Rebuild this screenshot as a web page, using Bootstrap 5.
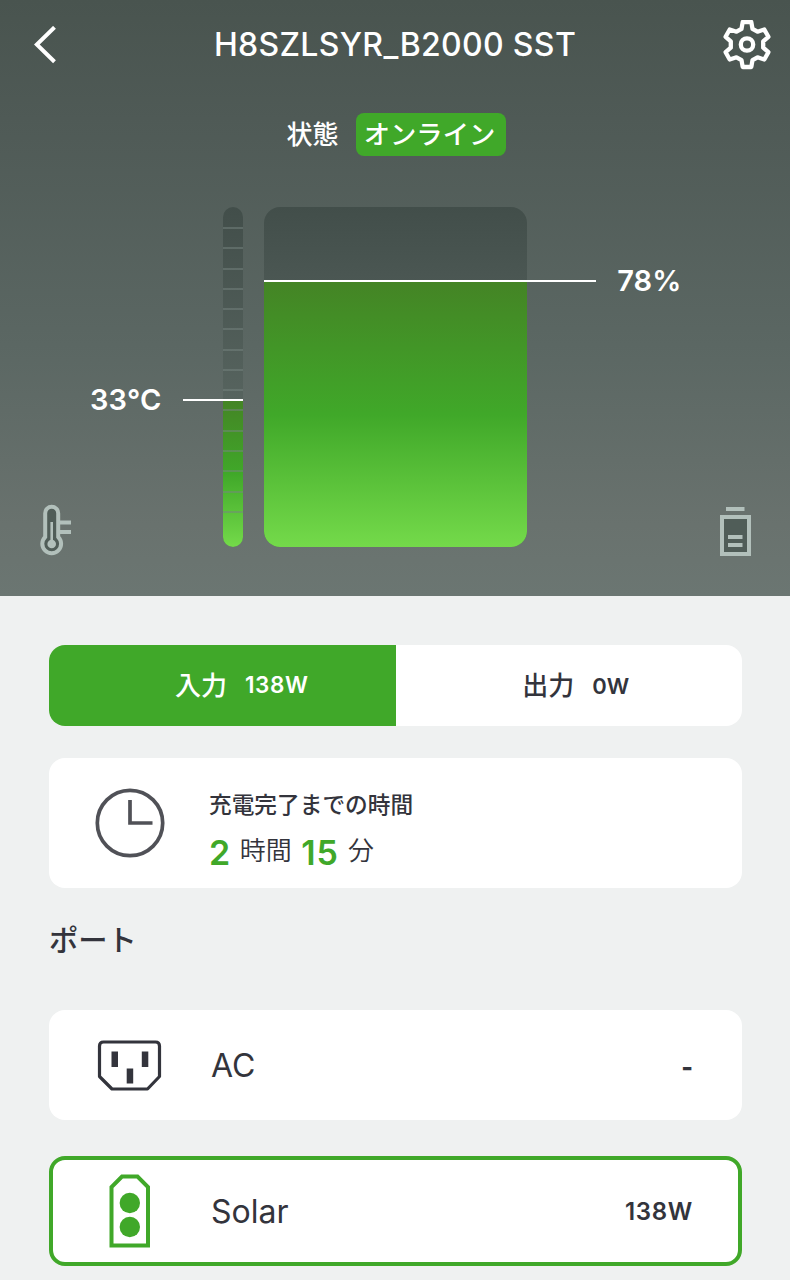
<!DOCTYPE html>
<html lang="ja">
<head>
<meta charset="utf-8">
<meta name="viewport" content="width=device-width, initial-scale=1">
<title>H8SZLSYR_B2000 SST</title>
<link rel="stylesheet" href="https://cdn.jsdelivr.net/npm/bootstrap@5.3.0/dist/css/bootstrap.min.css">
<style>
:root{--leaf:#40a829;--ink:#33343c}
body{background:#eff1f1;color:var(--ink);font-family:Inter,"Noto Sans CJK JP",sans-serif;height:1280px;overflow:hidden;line-height:1}
svg{display:block;flex:none}
.hero{height:596px;background:linear-gradient(180deg,#49544f 0%,#4f5a56 20%,#5b6763 58%,#69726e 88%,#6b7672 100%)}
.topbar{height:90px;padding:0 19px 0 34px}
.device-name{font-size:32px;font-weight:500;letter-spacing:.33px;padding:0 1px 0 10px}
.status-row{height:43px;margin-top:23px;gap:17px;font-size:26px;font-weight:500;padding-left:2px}
.state-label{padding-top:1px}
.state-pill{height:43px;width:150px;padding:2px 2px 0 0;border-radius:8px;background:var(--leaf);font-size:26.300px}
.gauges{height:340px;margin-top:51px}
.side-left{width:223px;padding:178px 0 0 90px}
.side-right{width:263px;padding:59px 0 0 90px}
.reading{font-size:29px;font-weight:600;line-height:30px;letter-spacing:.15px;white-space:nowrap}
.tube{width:20.5px;border-radius:10.25px;background:linear-gradient(#424e4a,#57645f 58%)}
.tank{width:263.5px;border-radius:16px;margin-left:20.5px;background:linear-gradient(#424e4a,#4b5753 22%)}
.fill{position:absolute;left:0;right:0;bottom:0;background:linear-gradient(#448425,#40a829 50%,#74da4a)}
.ticks{position:absolute;left:0;right:0;top:20px;height:288px;background:repeating-linear-gradient(rgba(118,132,128,.5) 0 2px,transparent 2px 20.27px)}
.clip{position:absolute;inset:0;overflow:hidden;border-radius:inherit}
.leader{position:absolute;height:2px;background:#fff}
.corner-icons{padding:0 39px 0 39px;margin-top:-43px}
.page{padding:49px 48px 0 49px}
.panel{background:#fff;border-radius:16px}
.tabs{height:81px;overflow:hidden}
.tabs>div{font-size:26px;font-weight:500}
.tabs .watts{font-size:22.500px;font-weight:600;margin-left:18px;letter-spacing:.6px}
.tabs .watts-zero{font-size:22px;letter-spacing:0}
.tab-on{background:var(--leaf);color:#fff;padding-left:39px}
.tab-off{padding-left:14px}
.eta{height:130px;margin-top:32px;padding-left:46px}
.eta-text{margin-left:44px;padding-top:13px}
.eta-title{font-size:22.7px;font-weight:500;line-height:30px;padding-top:1px}
.eta-time{font-weight:350;height:36px;margin-top:14px;gap:9.500px}
.eta-time span{font-size:26px;line-height:26px;padding-bottom:2px}
.eta-time b{font-size:34px;font-weight:600;line-height:36px;color:var(--leaf);padding-top:1px}
.eta-time .minutes{letter-spacing:.8px}
.ports-title{font-size:29.300px;font-weight:500;line-height:40px;margin:33px 0 49px}
.port{height:110px;padding:0 49px 0 48px}
.port-name{font-size:32px;padding-top:2px;margin-left:48px}
.port-value{font-size:24px;font-weight:600;letter-spacing:.7px;padding-top:1px}
.port-none{font-size:25px;font-weight:800;letter-spacing:0;padding-top:4px}
.port-live{margin-top:36px;border:4px solid var(--leaf);padding:0 45px 0 56px}
.port-live .port-name{margin-left:60px}
</style>
</head>
<body>
<header class="hero text-white">
  <div class="topbar d-flex align-items-center justify-content-between">
    <svg width="24" height="38" viewBox="0 0.500 24 38" fill="none" stroke="#fff" stroke-width="4"><path d="M20.5 1.8 2.8 19l17.700 17.200"/></svg>
    <div class="device-name">H8SZLSYR_B2000 SST</div>
    <svg width="48" height="50" viewBox="-24 -24.500 48 50" fill="none" stroke="#fff" stroke-width="4.300" stroke-linejoin="round"><path d="M-4.300-22.500H4.300L5.500-15.600 10.500-12.800 17.300-15 21.400-7.700 16.200-3.200V3.200L21.400 7.700 17.300 15 10.500 12.800 5.500 15.600 4.300 22.500H-4.300L-5.500 15.600-10.500 12.800-17.300 15-21.400 7.700-16.200 3.200V-3.200L-21.400-7.700-17.300-15-10.500-12.800-5.500-15.600Z"/><circle r="6.200"/></svg>
  </div>
  <div class="status-row d-flex justify-content-center align-items-center">
    <span class="state-label">状態</span><span class="state-pill d-flex align-items-center justify-content-center">オンライン</span>
  </div>
  <div class="gauges d-flex">
    <div class="side-left"><div class="reading">33°C</div></div>
    <div class="tube position-relative">
      <div class="clip"><div class="fill" style="height:147px"></div><div class="ticks"></div></div>
      <div class="leader" style="top:192px;left:-40px;right:0"></div>
    </div>
    <div class="tank position-relative">
      <div class="clip"><div class="fill" style="height:78%"></div></div>
      <div class="leader" style="top:73px;left:0;right:-69px"></div>
    </div>
    <div class="side-right"><div class="reading">78%</div></div>
  </div>
  <div class="corner-icons d-flex justify-content-between">
    <svg width="34" height="52" viewBox="0 0 34 52"><g fill="none" stroke="#b2c0bb" stroke-width="4"><path fill="#505d58" d="M6.200 33V9.200a6.500 6.500 0 0 1 13 0V33a9.400 9.400 0 1 1-13 0Z"/><path d="M19 18.500h13M19 28h13"/><path stroke-width="2.600" d="M12.700 18v20"/></g><circle cx="12.700" cy="40" r="4.300" fill="#b2c0bb"/></svg>
    <svg width="31" height="52" viewBox="0 0 31 52"><path fill="#505d58" stroke="#b2c0bb" stroke-width="4" d="M2 13h27v37H2z"/><path fill="#b2c0bb" d="M6 3h18.500v4H6zM8 31h14.500v4H8zM8 39h14.500v4H8z"/></svg>
  </div>
</header>
<main class="page">
  <div class="tabs panel d-flex">
    <div class="tab-on w-50 d-flex align-items-center justify-content-center"><span>入力</span><span class="watts">138W</span></div>
    <div class="tab-off w-50 d-flex align-items-center justify-content-center"><span>出力</span><span class="watts watts-zero">0W</span></div>
  </div>
  <section class="eta panel d-flex align-items-center">
    <svg width="70" height="70" viewBox="0 0 70 70" fill="none" stroke="#505157" stroke-width="3.700"><circle cx="35" cy="35" r="32.700"/><path d="M35 12v23h22.500"/></svg>
    <div class="eta-text">
      <div class="eta-title">充電完了までの時間</div>
      <div class="eta-time d-flex align-items-center"><b>2</b><span>時間</span><b class="minutes">15</b><span>分</span></div>
    </div>
  </section>
  <h2 class="ports-title">ポート</h2>
  <section class="port panel d-flex align-items-center">
    <svg width="66" height="52" viewBox="0 0 66 52"><path fill="none" stroke="#33343c" stroke-width="3.200" stroke-linejoin="round" d="M6.500 3H58.500Q62.500 3 62.500 7V37.500L50.500 50H15L2.500 37.500V7Q2.500 3 6.500 3Z"/><path fill="#33343c" d="M14.500 12.500h6.500V28h-6.500zM44.800 12.500h6.500V28h-6.500zM29.700 29.500h6.500v15h-6.500z"/></svg>
    <div class="port-name">AC</div>
    <div class="port-value port-none ms-auto">-</div>
  </section>
  <section class="port port-live panel d-flex align-items-center">
    <svg width="42" height="74" viewBox="0 0 42 74"><path fill="none" stroke="#40a829" stroke-width="4" d="M2.500 71.500V13L13 2.500H28.500L39 13V71.500Z"/><g fill="#40a829"><circle cx="20.800" cy="29" r="10.200"/><circle cx="20.800" cy="53" r="10.200"/></g></svg>
    <div class="port-name">Solar</div>
    <div class="port-value ms-auto">138W</div>
  </section>
</main>
<script src="https://cdn.jsdelivr.net/npm/bootstrap@5.3.0/dist/js/bootstrap.bundle.min.js"></script>
</body>
</html>
